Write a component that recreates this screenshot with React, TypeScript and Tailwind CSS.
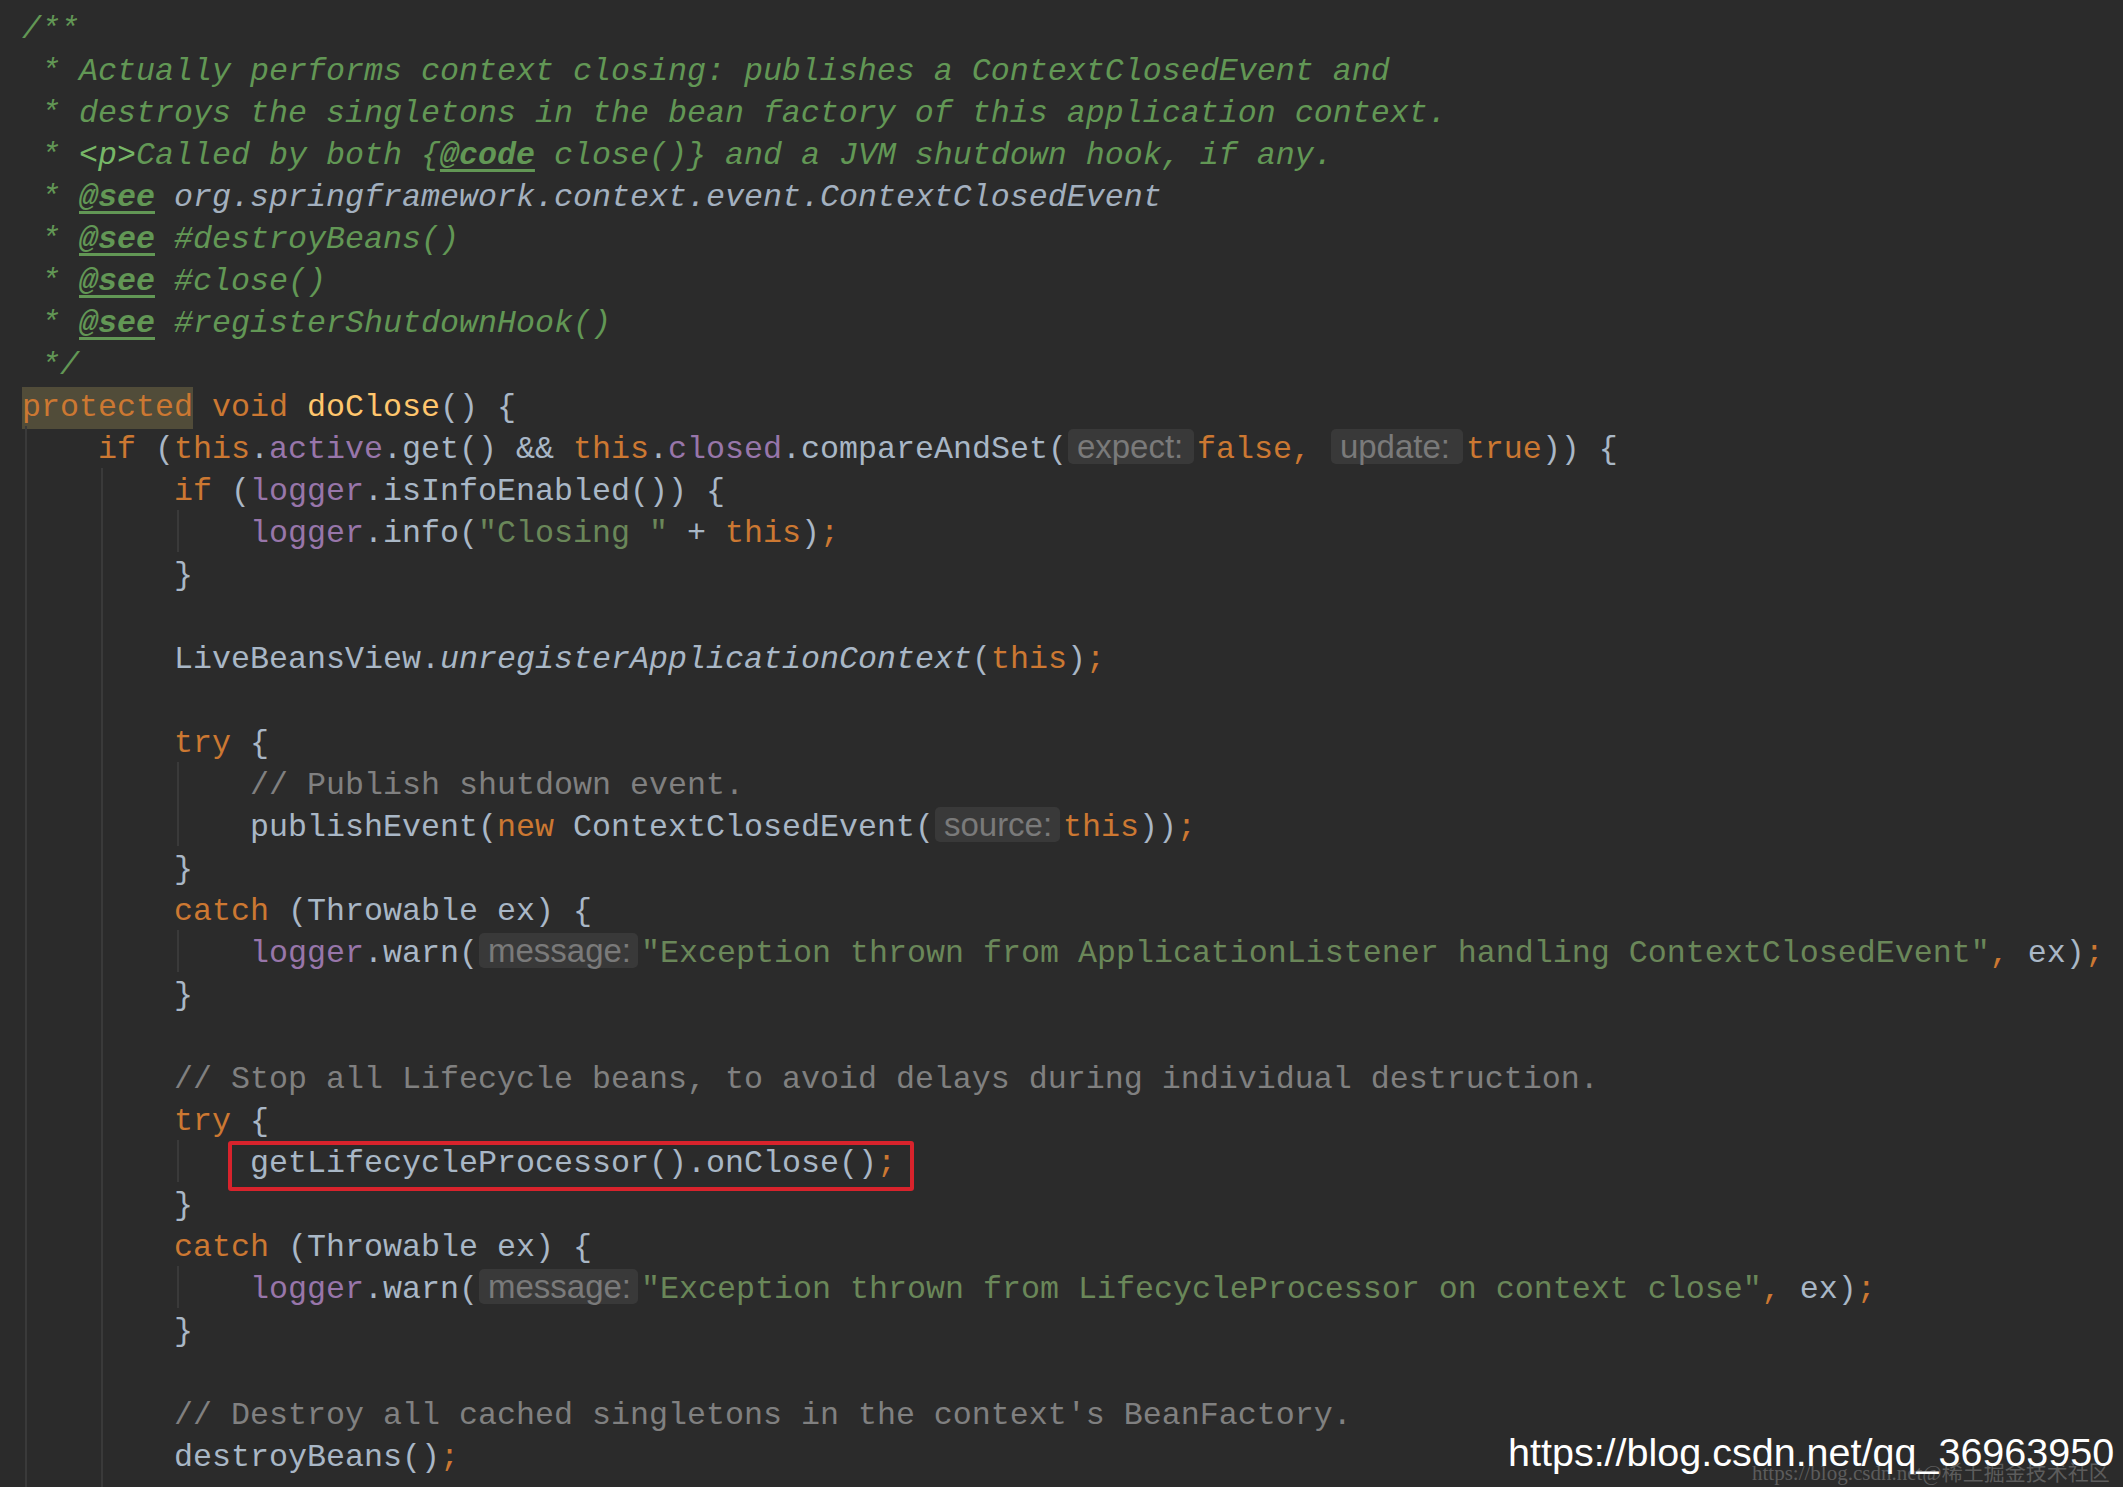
type Tok = [string, string];

interface CodeLine {
  indent: number;
  toks: Tok[];
  marked?: boolean;
}

const tokClass: Record<string, string> = {
  t: "text-[#a9b7c6]",
  k: "text-[#cc7832]",
  hl: "text-[#cc7832] bg-[#514c39]",
  s: "text-[#6a8759]",
  c: "text-[#808080]",
  d: "text-[#629755] italic",
  dt: "text-[#629755] italic font-bold underline decoration-[3px] underline-offset-[5px]",
  dm: "text-[#77b767] italic",
  dr: "text-[#a3b0bf] italic",
  f: "text-[#9876aa]",
  m: "text-[#ffc66d]",
  i: "text-[#a9b7c6] italic",
};

const hintWidth: Record<string, string> = {
  "message:": "w-[159px]",
  "expect:": "w-[126px]",
  "update:": "w-[132px]",
  "source:": "w-[125px]",
};

const lines: CodeLine[] = [
  { indent: 0, toks: [["d", "/**"]] },
  { indent: 0, toks: [["d", " * Actually performs context closing: publishes a ContextClosedEvent and"]] },
  { indent: 0, toks: [["d", " * destroys the singletons in the bean factory of this application context."]] },
  {
    indent: 0,
    toks: [
      ["d", " * "],
      ["dm", "<p>"],
      ["d", "Called by both {"],
      ["dt", "@code"],
      ["d", " close()} and a JVM shutdown hook, if any."],
    ],
  },
  {
    indent: 0,
    toks: [
      ["d", " * "],
      ["dt", "@see"],
      ["d", " "],
      ["dr", "org.springframework.context.event.ContextClosedEvent"],
    ],
  },
  { indent: 0, toks: [["d", " * "], ["dt", "@see"], ["d", " #destroyBeans()"]] },
  { indent: 0, toks: [["d", " * "], ["dt", "@see"], ["d", " #close()"]] },
  { indent: 0, toks: [["d", " * "], ["dt", "@see"], ["d", " #registerShutdownHook()"]] },
  { indent: 0, toks: [["d", " */"]] },
  { indent: 0, toks: [["hl", "protected"], ["k", " void "], ["m", "doClose"], ["t", "() {"]] },
  {
    indent: 1,
    toks: [
      ["k", "if "],
      ["t", "("],
      ["k", "this"],
      ["t", "."],
      ["f", "active"],
      ["t", ".get() && "],
      ["k", "this"],
      ["t", "."],
      ["f", "closed"],
      ["t", ".compareAndSet("],
      ["h", "expect:"],
      ["k", "false, "],
      ["h", "update:"],
      ["k", "true"],
      ["t", ")) {"],
    ],
  },
  { indent: 2, toks: [["k", "if "], ["t", "("], ["f", "logger"], ["t", ".isInfoEnabled()) {"]] },
  {
    indent: 3,
    toks: [
      ["f", "logger"],
      ["t", ".info("],
      ["s", '"Closing "'],
      ["t", " + "],
      ["k", "this"],
      ["t", ")"],
      ["k", ";"],
    ],
  },
  { indent: 2, toks: [["t", "}"]] },
  { indent: 2, toks: [] },
  {
    indent: 2,
    toks: [
      ["t", "LiveBeansView."],
      ["i", "unregisterApplicationContext"],
      ["t", "("],
      ["k", "this"],
      ["t", ")"],
      ["k", ";"],
    ],
  },
  { indent: 2, toks: [] },
  { indent: 2, toks: [["k", "try "], ["t", "{"]] },
  { indent: 3, toks: [["c", "// Publish shutdown event."]] },
  {
    indent: 3,
    toks: [
      ["t", "publishEvent("],
      ["k", "new "],
      ["t", "ContextClosedEvent("],
      ["h", "source:"],
      ["k", "this"],
      ["t", "))"],
      ["k", ";"],
    ],
  },
  { indent: 2, toks: [["t", "}"]] },
  { indent: 2, toks: [["k", "catch "], ["t", "(Throwable ex) {"]] },
  {
    indent: 3,
    toks: [
      ["f", "logger"],
      ["t", ".warn("],
      ["h", "message:"],
      ["s", '"Exception thrown from ApplicationListener handling ContextClosedEvent"'],
      ["k", ", "],
      ["t", "ex)"],
      ["k", ";"],
    ],
  },
  { indent: 2, toks: [["t", "}"]] },
  { indent: 2, toks: [] },
  { indent: 2, toks: [["c", "// Stop all Lifecycle beans, to avoid delays during individual destruction."]] },
  { indent: 2, toks: [["k", "try "], ["t", "{"]] },
  { indent: 3, toks: [["t", "getLifecycleProcessor().onClose()"], ["k", ";"]], marked: true },
  { indent: 2, toks: [["t", "}"]] },
  { indent: 2, toks: [["k", "catch "], ["t", "(Throwable ex) {"]] },
  {
    indent: 3,
    toks: [
      ["f", "logger"],
      ["t", ".warn("],
      ["h", "message:"],
      ["s", '"Exception thrown from LifecycleProcessor on context close"'],
      ["k", ", "],
      ["t", "ex)"],
      ["k", ";"],
    ],
  },
  { indent: 2, toks: [["t", "}"]] },
  { indent: 2, toks: [] },
  { indent: 2, toks: [["c", "// Destroy all cached singletons in the context's BeanFactory."]] },
  { indent: 2, toks: [["t", "destroyBeans()"], ["k", ";"]] },
  { indent: 2, toks: [] },
];

const Hint = ({ label }: { label: string }) => (
  <span
    className={`${hintWidth[label]} ml-[1px] mr-[3px] h-[35px] shrink-0 rounded-[5px] bg-[#393939] pl-[9px] font-['Liberation_Sans',sans-serif] text-[33px] leading-[35px] text-[#7a7a7a]`}
  >
    {label}
  </span>
);

const App = () => {
  return (
    <div className="relative h-[1487px] w-full overflow-hidden bg-[#2b2b2b]">
      <div className="flex flex-col pl-[22px] pt-[6px] font-['Liberation_Mono',monospace] text-[31.66px]">
        {lines.map((line, idx) => (
          <div key={idx} className="relative flex h-[42px] shrink-0">
            {Array.from({ length: line.indent }).map((_, g) => (
              <div key={g} className="h-full w-[76px] shrink-0 pl-[3px]">
                <div className="h-full w-[2px] bg-[#3a3a3a]" />
              </div>
            ))}
            <div className="flex items-start pt-[3px]">
              {line.toks.map(([kind, text], j) =>
                kind === "h" ? (
                  <Hint key={j} label={text} />
                ) : (
                  <span key={j} className={`${tokClass[kind]} whitespace-pre leading-[42px]`}>
                    {text}
                  </span>
                )
              )}
            </div>
            {line.marked && (
              <div className="absolute left-[206px] top-[1px] h-[50px] w-[686px] rounded-[3px] border-4 border-[#d8232c]" />
            )}
          </div>
        ))}
      </div>

      {/* watermarks */}
      <div className="absolute left-[1752px] top-[1462px] whitespace-nowrap font-['Liberation_Serif','Noto_Sans_CJK_SC',serif] text-[21px] leading-[22px] text-[#5c5c5c]">
        https://blog.csdn.net@稀土掘金技术社区
      </div>
      <div className="absolute left-[1508px] top-[1433px] whitespace-nowrap font-['Liberation_Sans',sans-serif] text-[39.5px] leading-none text-white">
        https://blog.csdn.net/qq_36963950
      </div>
    </div>
  );
};

export default App;
